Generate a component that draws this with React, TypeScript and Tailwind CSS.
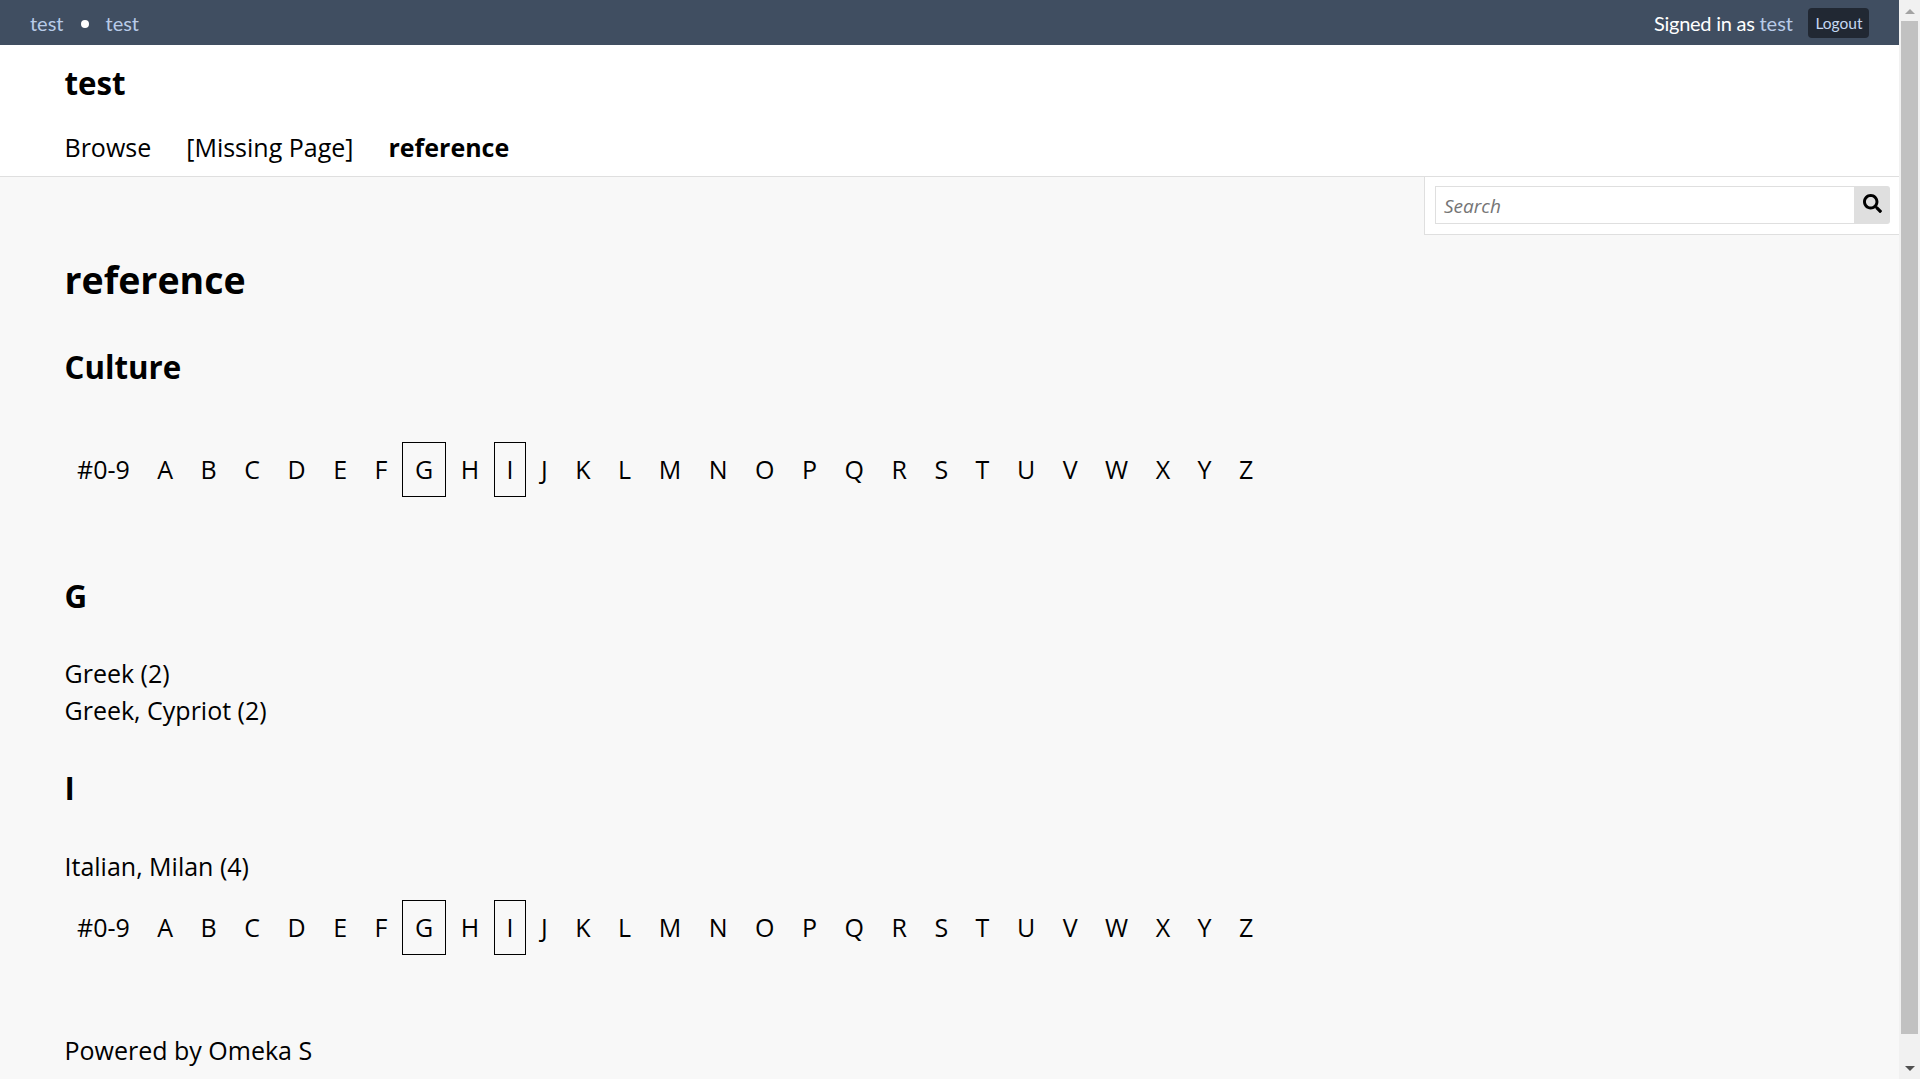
const LETTERS = ["#0-9", ..."ABCDEFGHIJKLMNOPQRSTUVWXYZ"];
const ACTIVE = ["G", "I"];

function Alphabet() {
  return (
    <ul className="flex h-[55px] gap-[2.5px]">
      {LETTERS.map((l) => (
        <li
          key={l}
          className={
            ACTIVE.includes(l)
              ? "border border-black px-[11.5px] leading-[53px]"
              : "border border-transparent px-[11.5px] leading-[53px]"
          }
        >
          {l}
        </li>
      ))}
    </ul>
  );
}

function UserBar() {
  return (
    <div className="flex h-[45px] items-center justify-between bg-[#404e61] pr-[30px] pl-[30px] font-['Lato',sans-serif] text-[20px] text-white">
      <nav className="flex items-center leading-6">
        <a className="pt-px text-[#b8cbe8]">test</a>
        <span className="mx-[17px] mt-[3px] size-2 rounded-full bg-white" />
        <a className="pt-px text-[#b8cbe8]">test</a>
      </nav>
      <div className="flex items-center">
        <span className="pt-px leading-6 tracking-[-0.25px]">
          Signed in as <a className="tracking-normal text-[#b8cbe8]">test</a>
        </span>
        <a className="ml-[15px] h-[30px] w-[61px] rounded bg-[#212833] pl-px text-center text-[15.5px] leading-[31px] text-[#c5d8f2]">
          Logout
        </a>
      </div>
    </div>
  );
}

function SearchBox() {
  return (
    <form className="absolute top-0 right-0 flex h-[58px] w-[475px] border-b border-l border-[#dfdfdf] bg-white py-[9px] pr-[9px] pl-[10px]">
      <div className="h-[38px] flex-1 border border-r-0 border-[#dfdfdf] pl-2 text-[19px] leading-[38px] text-[#757575] italic">
        Search
      </div>
      <button className="flex h-[38px] w-9 items-center justify-center rounded-r-[3px] bg-[#dfdfdf] pb-[3px]">
        <svg viewBox="0 0 512 512" className="size-[19px] fill-black">
          <path d="M505 442.7 405.300 343c-4.500-4.500-10.600-7-17-7H372c27.600-35.300 44-79.700 44-128C416 93.100 322.900 0 208 0S0 93.100 0 208s93.100 208 208 208c48.300 0 92.700-16.400 128-44v16.300c0 6.400 2.500 12.500 7 17l99.700 99.700c9.400 9.400 24.600 9.400 33.900 0l28.300-28.300c9.400-9.400 9.400-24.600.1-34zM208 336c-70.700 0-128-57.200-128-128 0-70.700 57.200-128 128-128 70.700 0 128 57.200 128 128 0 70.700-57.200 128-128 128z" />
        </svg>
      </button>
    </form>
  );
}

function Scrollbar() {
  return (
    <div className="flex w-[21px] flex-col items-center justify-between bg-[#f1f1f1]">
      <div className="flex h-[21px] items-end pb-[7px]">
        <svg viewBox="0 0 10 5" className="h-[5px] w-[10px] fill-[#a3a3a3]">
          <path d="M0 5 5 0l5 5z" />
        </svg>
      </div>
      <div className="h-[1013px] w-[17px] bg-[#c1c1c1]" />
      <div className="flex h-[45px] items-end pb-[8px]">
        <svg viewBox="0 0 10 5" className="h-[5px] w-[10px] fill-[#505050]">
          <path d="M0 0h10L5 5z" />
        </svg>
      </div>
    </div>
  );
}

const H3 = "text-[31.25px] leading-10 font-bold";

export default function App() {
  return (
    <div className="flex h-[1079px] overflow-hidden bg-[#f8f8f8] font-['Open_Sans',sans-serif] text-[25px] leading-[37px] text-black">
      <div className="flex-1">
        <UserBar />
        <header className="h-[132px] border-b border-[#dfdfdf] bg-white px-[64.500px] pt-[18px]">
          <h1 className={H3}>test</h1>
          <nav className="mt-[26px] flex gap-[35px]">
            <a>Browse</a>
            <a>[Missing Page]</a>
            <a className="font-bold">reference</a>
          </nav>
        </header>
        <main className="relative px-[64.500px] pt-[78px]">
          <SearchBox />
          <h2 className="text-[37.5px] leading-[50px] font-bold">reference</h2>
          <h3 className={`${H3} mt-[42px]`}>Culture</h3>
          <div className="mt-[55px]">
            <Alphabet />
          </div>
          <h3 className={`${H3} mt-[79px]`}>G</h3>
          <ul className="mt-[39px]">
            <li>Greek (2)</li>
            <li>Greek, Cypriot (2)</li>
          </ul>
          <h3 className={`${H3} mt-[39px]`}>I</h3>
          <ul className="mt-[40px]">
            <li>Italian, Milan (4)</li>
          </ul>
          <div className="mt-[15px]">
            <Alphabet />
          </div>
          <footer className="mt-[77px]">Powered by Omeka S</footer>
        </main>
      </div>
      <Scrollbar />
    </div>
  );
}
